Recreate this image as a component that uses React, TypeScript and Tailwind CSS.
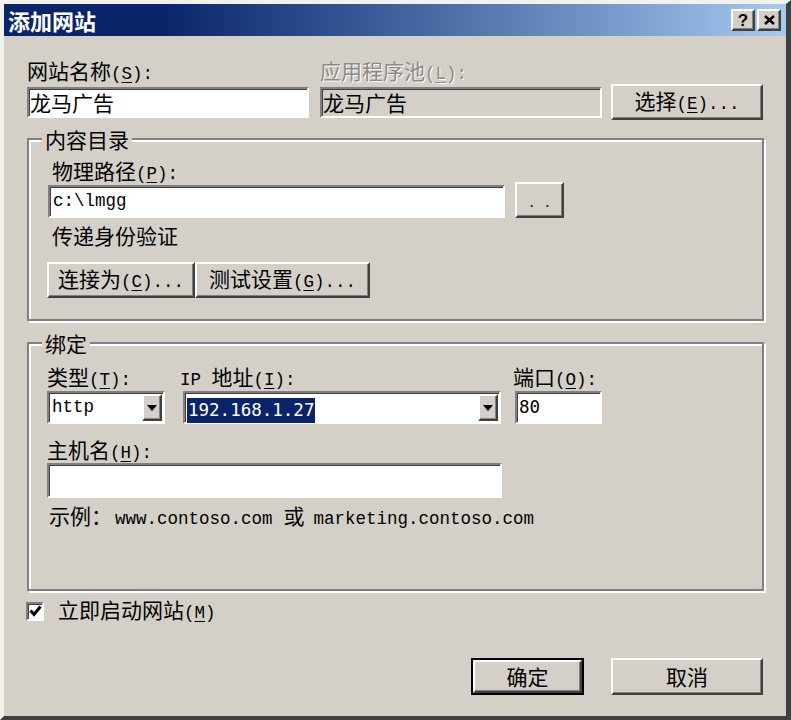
import React from 'react'

const raised =
  'bg-[#d4d0c8] border-2 border-t-white border-l-white border-r-[#404040] border-b-[#404040] shadow-[inset_-1px_-1px_0_#808080]'
const sunken =
  'border-2 border-t-[#808080] border-l-[#808080] border-r-white border-b-white shadow-[inset_1px_1px_0_#404040]'
const group =
  'border-2 border-[#808080] shadow-[inset_2px_2px_0_#fff,2px_2px_0_#fff] min-w-0'
const mono = "font-['Liberation_Mono',monospace] text-[17.5px]"

// mnemonic part, e.g. "(S):" — half-width like the original system font
const Key = ({ c, tail = '' }: { c: string; tail?: string }) => (
  <span className={mono}>
    (<span className="underline underline-offset-[3px]">{c}</span>){tail}
  </span>
)

const Arrow = () => (
  <div className={`${raised} w-[20px] h-[27px] mr-[1px] flex items-center justify-center`}>
    <div className="w-0 h-0 border-l-[5px] border-r-[5px] border-t-[6px] border-l-transparent border-r-transparent border-t-black" />
  </div>
)

const Label = ({ children, className = '' }: { children: React.ReactNode; className?: string }) => (
  <div className={`h-[26px] leading-[26px] whitespace-nowrap ${className}`}>{children}</div>
)

export default function App() {
  return (
    <div className="w-[791px] h-[720px] bg-[#d4d0c8] border-t-[4px] border-l-[4px] border-r-[5px] border-b-[4px] border-t-[#f2f1ec] border-l-[#f2f1ec] border-r-[#404040] border-b-[#404040] flex flex-col text-black text-[21px] font-['Noto_Sans_CJK_SC',sans-serif] overflow-hidden">
      {/* title bar */}
      <div className="h-[32px] shrink-0 flex items-center justify-between pl-[4px] pr-[5px] bg-linear-to-r from-[#0a246a] from-20% to-[#a6caf0]">
        <span className="text-white font-bold text-[22px] leading-none">添加网站</span>
        <div className="flex gap-[2px]">
          <div className={`${raised} w-[24px] h-[22px] flex items-center justify-center font-bold text-[17px] leading-none font-['Liberation_Sans',sans-serif]`}>
            ?
          </div>
          <div className={`${raised} w-[24px] h-[22px] flex items-center justify-center`}>
            <svg width="11" height="10" viewBox="0 0 11 10">
              <path d="M1 1 L10 9 M10 1 L1 9" stroke="#000" strokeWidth="2.4" />
            </svg>
          </div>
        </div>
      </div>

      {/* body */}
      <div className="flex-1 pt-[21px] pl-[23px] pr-[23px] flex flex-col">
        <div className="flex">
          <div className="w-[282px]">
            <Label>
              网站名称<Key c="S" tail=":" />
            </Label>
            <div className={`${sunken} mt-[4px] h-[31px] bg-white pl-[1px] leading-[27px]`}>龙马广告</div>
          </div>
          <div className="w-[282px] ml-[11px]">
            <Label className="text-[#8c8a84] [text-shadow:1px_1px_0_#fff]">
              应用程序池<Key c="L" tail=":" />
            </Label>
            <div className={`${sunken} mt-[4px] h-[31px] bg-[#d4d0c8] pl-[1px] leading-[27px]`}>龙马广告</div>
          </div>
          <button className={`${raised} ml-[9px] mt-[27px] w-[152px] h-[36px] leading-none`}>
            选择<Key c="E" tail="..." />
          </button>
        </div>

        <fieldset className={`${group} mt-[8px] w-[737px] pb-[21px]`}>
          <legend className="ml-[13px] px-[3px] h-[22px] leading-[22px] bg-[#d4d0c8]">内容目录</legend>
          <div className="pl-[19px]">
            <Label className="mt-[7px] pl-[4px]">
              物理路径<Key c="P" tail=":" />
            </Label>
            <div className="flex items-end mt-[-1px]">
              <div className={`${sunken} w-[457px] h-[33px] bg-white pl-[3px] leading-[29px] ${mono}`}>c:\lmgg</div>
              <button className={`${raised} ml-[10px] w-[49px] h-[36px] !text-[13px] leading-none pt-[6px] ${mono}`}>
                . .
              </button>
            </div>
            <Label className="mt-[4px] pl-[4px]">传递身份验证</Label>
            <div className="flex mt-[14px] ml-[-1px]">
              <button className={`${raised} w-[148px] h-[36px] leading-none`}>
                连接为<Key c="C" tail="..." />
              </button>
              <button className={`${raised} w-[175px] h-[36px] leading-none`}>
                测试设置<Key c="G" tail="..." />
              </button>
            </div>
          </div>
        </fieldset>

        <fieldset className={`${group} mt-[11px] w-[737px] h-[259px]`}>
          <legend className="ml-[13px] px-[3px] h-[22px] leading-[22px] bg-[#d4d0c8]">绑定</legend>
          <div className="pl-[18px]">
            <div className="flex mt-[9px]">
              <div className="w-[118px]">
                <Label>
                  类型<Key c="T" tail=":" />
                </Label>
                <div className={`${sunken} mt-[2px] h-[33px] bg-white flex items-center`}>
                  <span className={`flex-1 pl-[3px] ${mono}`}>http</span>
                  <Arrow />
                </div>
              </div>
              <div className="w-[318px] ml-[18px]">
                <Label className="ml-[-3px]">
                  <span className={mono}>IP </span>地址<Key c="I" tail=":" />
                </Label>
                <div className={`${sunken} mt-[2px] h-[33px] bg-white flex items-center`}>
                  <div className="flex-1 pl-[2px]">
                    <span className="bg-[#0a246a] text-white px-[1px] leading-[25px] inline-block text-[17.5px] font-['DejaVu_Sans_Mono',monospace]">
                      192.168.1.27
                    </span>
                  </div>
                  <Arrow />
                </div>
              </div>
              <div className="w-[87px] ml-[14px]">
                <Label className="ml-[-2px]">
                  端口<Key c="O" tail=":" />
                </Label>
                <div className={`${sunken} mt-[2px] h-[33px] bg-white pl-[2px] leading-[29px] text-[17.5px] font-['DejaVu_Sans_Mono',monospace]`}>
                  80
                </div>
              </div>
            </div>
            <Label className="mt-[12px]">
              主机名<Key c="H" tail=":" />
            </Label>
            <div className={`${sunken} mt-[1px] w-[455px] h-[35px] bg-white`} />
            <Label className="mt-[4px] ml-[2px] flex items-baseline">
              <span>示例：</span>
              <span className={`${mono} ml-[3px]`}>www.contoso.com</span>
              <span className="ml-[11px]">或</span>
              <span className={`${mono} ml-[9px]`}>marketing.contoso.com</span>
            </Label>
          </div>
        </fieldset>

        <div className="flex items-center mt-[7px] h-[26px]">
          <div className={`${sunken} w-[18px] h-[19px] bg-white flex items-center justify-center ml-[-1px]`}>
            <svg width="13" height="12" viewBox="0 0 13 12">
              <path d="M1.5 5.5 L5 9.5 L11.5 1.5" stroke="#000" strokeWidth="3" fill="none" />
            </svg>
          </div>
          <span className="ml-[14px] leading-[26px]">
            立即启动网站<Key c="M" />
          </span>
        </div>

        <div className="flex justify-end mt-[34px] gap-[27px]">
          <button className="w-[113px] h-[37px] border-2 border-black p-0">
            <div className={`${raised} w-full h-full flex items-center justify-center`}>确定</div>
          </button>
          <button className={`${raised} w-[152px] h-[37px] leading-none`}>取消</button>
        </div>
      </div>
    </div>
  )
}
